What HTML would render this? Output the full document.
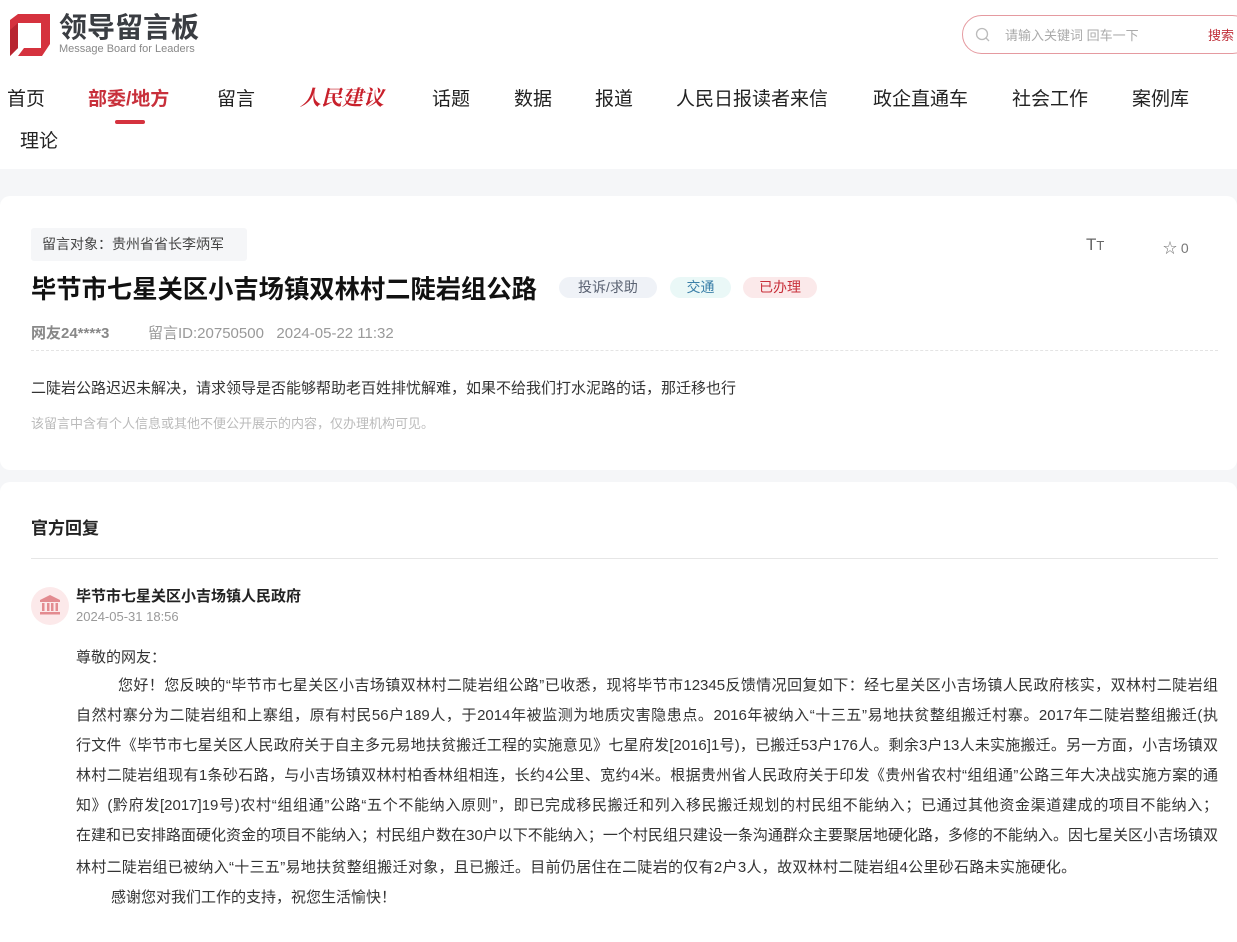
<!DOCTYPE html>
<html><head><meta charset="utf-8"><style>
*{margin:0;padding:0;box-sizing:border-box}
body{width:1237px;height:929px;overflow:hidden;background:#fff;font-family:"Liberation Sans","Noto Sans CJK SC",sans-serif;color:#222;position:relative}
.a{position:absolute;white-space:nowrap}
.nav{font-size:19px;color:#222;top:84px}
.gray{position:absolute;left:0;top:169px;width:1237px;height:760px;background:#f5f6f8}
.card{position:absolute;left:0;width:1237px;background:#fff;border-radius:10px}
.tag{position:absolute;top:277px;height:21px;border-radius:11px;font-size:14px;line-height:21px;text-align:center}
.ln{position:absolute;left:76px;width:1142px;font-size:15px;color:#333;line-height:20px;text-align:justify;text-align-last:justify;white-space:nowrap}
</style></head><body>
<svg class="a" style="left:8px;top:14px" width="42" height="42" viewBox="0 0 42 42"><path d="M2 6 L10 0 L42 0 L42 30 L34 42 L10 42 L16 34 L33 34 L33 9 L10 9 L10 34 L2 42 Z" fill="#d5323e"/><path d="M2 16 L10 9 L10 34 L2 42Z" fill="#b82530"/></svg>
<div class="a" style="left:59px;top:6px;font-size:28px;font-weight:bold;color:#3a3d42">领导留言板</div>
<div class="a" style="left:59px;top:43px;font-size:11px;color:#888">Message Board for Leaders</div>
<div class="a" style="left:962px;top:15px;width:290px;height:39px;border:1px solid #e59aa0;border-radius:20px"></div>
<svg class="a" style="left:975px;top:27px" width="15" height="15" viewBox="0 0 15 15"><circle cx="7" cy="7" r="5.5" fill="none" stroke="#bbb" stroke-width="1.3"/><path d="M11 11l3 3" stroke="#bbb" stroke-width="1.3"/></svg>
<div class="a" style="left:1005px;top:25px;font-size:13px;color:#aaa">请输入关键词 回车一下</div>
<div class="a" style="left:1208px;top:25px;font-size:13px;color:#c0303a">搜索</div>
<div class="a nav" style="left:7px">首页</div>
<div class="a nav" style="left:88px;color:#c8303b;font-weight:bold">部委/地方</div>
<div class="a" style="left:115px;top:120px;width:30px;height:4px;border-radius:2px;background:#d5323e"></div>
<div class="a nav" style="left:217px">留言</div>
<div class="a nav" style="left:300px;color:#c8202b;font-weight:bold;font-style:italic;font-size:21px;top:82px;font-family:'Noto Serif CJK SC',serif">人民建议</div>
<div class="a nav" style="left:432px">话题</div>
<div class="a nav" style="left:514px">数据</div>
<div class="a nav" style="left:595px">报道</div>
<div class="a nav" style="left:676px">人民日报读者来信</div>
<div class="a nav" style="left:873px">政企直通车</div>
<div class="a nav" style="left:1012px">社会工作</div>
<div class="a nav" style="left:1132px">案例库</div>
<div class="a nav" style="left:20px;top:126px">理论</div>
<div class="gray"></div>
<div class="card" style="top:196px;height:274px"></div>
<div class="card" style="top:482px;height:460px"></div>
<div class="a" style="left:31px;top:228px;width:216px;height:33px;background:#f5f6f8;border-radius:3px;font-size:14px;color:#444;line-height:33px;padding-left:11px">留言对象：贵州省省长李炳军</div>
<div class="a" style="left:1086px;top:235px;font-size:17px;color:#666">T<span style="font-size:13px">T</span></div>
<div class="a" style="left:1163px;top:238px;font-size:14px;color:#777">☆ 0</div>
<div class="a" style="left:31px;top:270px;font-size:25.3px;font-weight:bold;color:#111">毕节市七星关区小吉场镇双林村二陡岩组公路</div>
<div class="tag" style="left:559px;width:98px;background:#eff2f7;color:#5a6272">投诉/求助</div>
<div class="tag" style="left:670px;width:61px;background:#eaf8f7;color:#3b7fa8">交通</div>
<div class="tag" style="left:743px;width:74px;background:#fbe9ea;color:#c8303b">已办理</div>
<div class="a" style="left:31px;top:322px;font-size:15px;color:#888;font-weight:bold">网友24****3</div>
<div class="a" style="left:148px;top:322px;font-size:15px;color:#999">留言ID:20750500&nbsp;&nbsp;&nbsp;2024-05-22 11:32</div>
<div class="a" style="left:31px;top:350px;width:1187px;border-top:1px dashed #e4e4e4"></div>
<div class="a" style="left:31px;top:377px;font-size:15px;color:#333">二陡岩公路迟迟未解决，请求领导是否能够帮助老百姓排忧解难，如果不给我们打水泥路的话，那迁移也行</div>
<div class="a" style="left:31px;top:413px;font-size:13px;color:#bbb">该留言中含有个人信息或其他不便公开展示的内容，仅办理机构可见。</div>
<div class="a" style="left:31px;top:514px;font-size:17px;font-weight:bold;color:#222">官方回复</div>
<div class="a" style="left:31px;top:558px;width:1187px;border-top:1px solid #e6e6e6"></div>
<div class="a" style="left:31px;top:587px;width:38px;height:38px;border-radius:50%;background:#fce9ea"></div>
<svg class="a" style="left:39px;top:594px" width="22" height="22" viewBox="0 0 22 22" fill="#e38b90"><path d="M11 1 L21 6 L21 8 L1 8 L1 6Z"/><rect x="3" y="9" width="2.5" height="8"/><rect x="8" y="9" width="2.5" height="8"/><rect x="12" y="9" width="2.5" height="8"/><rect x="16.5" y="9" width="2.5" height="8"/><rect x="1" y="18" width="20" height="2.5"/></svg>
<div class="a" style="left:76px;top:585px;font-size:15px;font-weight:bold;color:#222">毕节市七星关区小吉场镇人民政府</div>
<div class="a" style="left:76px;top:609px;font-size:13px;color:#999">2024-05-31 18:56</div>
<div class="a" style="left:76px;top:646px;font-size:15px;color:#333">尊敬的网友：</div>
<div class="ln" style="top:676px;padding-left:42px">您好！您反映的“毕节市七星关区小吉场镇双林村二陡岩组公路”已收悉，现将毕节市12345反馈情况回复如下：经七星关区小吉场镇人民政府核实，双林村二陡岩组</div>
<div class="ln" style="top:706px">自然村寨分为二陡岩组和上寨组，原有村民56户189人，于2014年被监测为地质灾害隐患点。2016年被纳入“十三五”易地扶贫整组搬迁村寨。2017年二陡岩整组搬迁(执</div>
<div class="ln" style="top:736px">行文件《毕节市七星关区人民政府关于自主多元易地扶贫搬迁工程的实施意见》七星府发[2016]1号)，已搬迁53户176人。剩余3户13人未实施搬迁。另一方面，小吉场镇双</div>
<div class="ln" style="top:766px">林村二陡岩组现有1条砂石路，与小吉场镇双林村柏香林组相连，长约4公里、宽约4米。根据贵州省人民政府关于印发《贵州省农村“组组通”公路三年大决战实施方案的通</div>
<div class="ln" style="top:796px">知》(黔府发[2017]19号)农村“组组通”公路“五个不能纳入原则”，即已完成移民搬迁和列入移民搬迁规划的村民组不能纳入；已通过其他资金渠道建成的项目不能纳入；</div>
<div class="ln" style="top:826px">在建和已安排路面硬化资金的项目不能纳入；村民组户数在30户以下不能纳入；一个村民组只建设一条沟通群众主要聚居地硬化路，多修的不能纳入。因七星关区小吉场镇双</div>
<div class="a" style="left:76px;top:856px;font-size:15px;color:#333;letter-spacing:0.3px">林村二陡岩组已被纳入“十三五”易地扶贫整组搬迁对象，且已搬迁。目前仍居住在二陡岩的仅有2户3人，故双林村二陡岩组4公里砂石路未实施硬化。</div>
<div class="a" style="left:111px;top:886px;font-size:15px;color:#333">感谢您对我们工作的支持，祝您生活愉快！</div>
</body></html>
